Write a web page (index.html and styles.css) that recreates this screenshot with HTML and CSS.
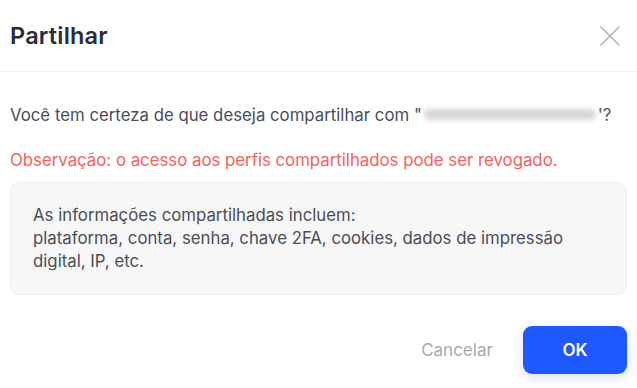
FILE: index.html
```html
<!DOCTYPE html>
<html lang="pt">
<head>
<meta charset="utf-8">
<title>Partilhar</title>
<link rel="stylesheet" href="styles.css">
</head>
<body>
<div class="dialog">
  <div class="header">
    <h1 class="title">Partilhar</h1>
    <button class="close" aria-label="Fechar">
      <svg width="22" height="22" viewBox="0 0 22 22"><path d="M2 2 L20 20 M20 2 L2 20" stroke="#b4b4b8" stroke-width="1.7" fill="none" stroke-linecap="round"/></svg>
    </button>
  </div>
  <div class="body">
    <p class="question">Você tem certeza de que deseja compartilhar com "<span class="redacted"></span>'?</p>
    <p class="note">Observação: o acesso aos perfis compartilhados pode ser revogado.</p>
    <div class="info">
      As informações compartilhadas incluem:<br>
      plataforma, conta, senha, chave 2FA, cookies, dados de impressão digital, IP, etc.
    </div>
  </div>
  <div class="footer">
    <button class="btn cancel">Cancelar</button>
    <button class="btn ok">OK</button>
  </div>
</div>
</body>
</html>
```
FILE: styles.css
```css
* { box-sizing: border-box; }
html, body { margin: 0; background: #fff; }
body { font-family: Inter, "Noto Sans", sans-serif; color: #4a4d57; }
.dialog { width: 637px; height: 388px; }
.header {
  height: 72px;
  display: flex;
  align-items: center;
  justify-content: space-between;
  padding: 0 16px 0 10px;
  border-bottom: 1px solid #efeff1;
}
.title {
  margin: 0;
  font-size: 23.5px;
  font-weight: 600;
  color: #2a2c3d;
  letter-spacing: 0.2px;
}
.close {
  border: 0; background: none; padding: 0; width: 22px; height: 22px;
  display: flex;
}
.body { padding: 0 10px; }
.question {
  margin: 33px 0 0;
  font-size: 16.8px;
  line-height: 20px;
}
.redacted {
  display: inline-block;
  width: 172px;
  height: 11px;
  margin: 0 2px;
  background: #d6d6da;
  border-radius: 5px;
  filter: blur(2.5px);
  vertical-align: 1px;
}
.note {
  margin: 25px 0 0;
  font-size: 16.8px;
  line-height: 20px;
  color: #f4615e;
}
.info {
  margin-top: 12px;
  height: 113px;
  background: #f7f7f8;
  border: 1px solid #f0f0f2;
  border-radius: 9px;
  padding: 21px 22px;
  font-size: 16.8px;
  line-height: 23px;
  color: #4a4d57;
}
.footer {
  display: flex;
  justify-content: flex-end;
  align-items: center;
  gap: 14px;
  padding: 31px 10px 0;
}
.btn {
  font-family: inherit;
  height: 48px;
  border: 0;
  border-radius: 9px;
  font-size: 17px;
  cursor: pointer;
}
.cancel { background: none; color: #a9a9ad; width: 104px; }
.ok {
  width: 104px;
  background: #1f58ff;
  color: #fff;
  font-weight: 600;
  box-shadow: 0 4px 12px rgba(31, 88, 255, 0.18);
}
```
